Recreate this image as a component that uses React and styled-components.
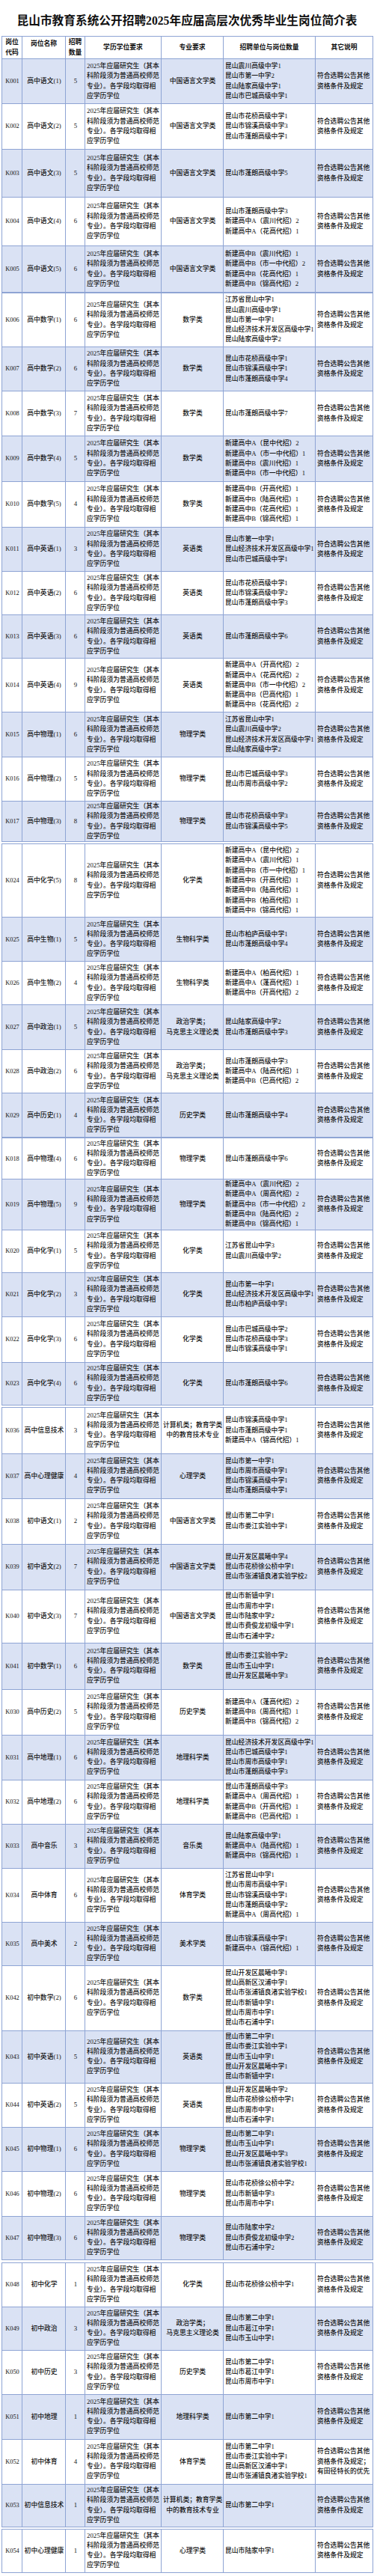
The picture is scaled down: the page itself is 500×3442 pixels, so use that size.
import styled, { createGlobalStyle } from "styled-components";

const GlobalStyle = createGlobalStyle`
  body {
    margin: 0;
    background: #fff;
    color: #151515;
    font-family: "Liberation Serif", "Noto Sans CJK SC", serif;
  }
`;

const Page = styled.main`
  width: 500px;
  padding: 18px 0 6px;
`;

const Title = styled.h1`
  margin: 0 0 10px;
  text-align: center;
  font-size: 15.7px;
  line-height: 20px;
  font-weight: 700;
  color: #111;
  white-space: nowrap;
`;

const Table = styled.table`
  width: 496px;
  margin: ${(p) => p.$gap}px 0 0 2px;
  border-collapse: collapse;
  table-layout: fixed;
  font-size: 8.8px;
  line-height: 13.3px;
`;

const Col = styled.col`
  width: ${(p) => p.$w}px;
`;

const Row = styled.tr`
  height: ${(p) => p.$h}px;
  background: ${(p) => (p.$shade ? "#dae2f4" : "#fff")};
`;

const HeadCell = styled.th`
  border: 1px solid #8ea4d4;
  padding: 0 1px;
  font-weight: 700;
  color: #111;
  text-align: center;
  vertical-align: ${(p) => (p.$top ? "top" : "middle")};
  padding-top: ${(p) => (p.$top ? "3px" : "0")};
  white-space: nowrap;
`;

const Cell = styled.td`
  border: 1px solid #8ea4d4;
  padding: 0 1px 0 2px;
  text-align: ${(p) => (p.$left ? "left" : "center")};
  vertical-align: middle;
  white-space: nowrap;
  overflow: hidden;
  font-weight: 500;
`;

const Code = styled.span`
  font-size: 8.4px;
`;

const EDU = ["2025年应届研究生（其本", "科阶段须为普通高校师范", "专业）。各学段均取得相", "应学历学位"];
const NOTE = ["符合选聘公告其他", "资格条件及规定"];

const ZW = ["中国语言文学类"];
const SX = ["数学类"];
const YY = ["英语类"];
const WL = ["物理学类"];
const HX = ["化学类"];
const SW = ["生物科学类"];
const ZZ = ["政治学类；", "马克思主义理论类"];
const LS = ["历史学类"];
const DL = ["地理科学类"];
const YL = ["音乐类"];
const TY = ["体育学类"];
const MS = ["美术学类"];
const XX = ["计算机类；教育学类", "中的教育技术专业"];
const XL = ["心理学类"];

const COLS = [27, 58, 26, 102, 83, 123, 77];

const segments = [
  {
    gap: 0,
    head: true,
    rows: [
      { c: "K001", n: "高中语文(1)", q: 5, m: ZW, h: 60, u: ["昆山震川高级中学1", "昆山市第一中学2", "昆山陆家高级中学1", "昆山市巴城高级中学1"] },
      { c: "K002", n: "高中语文(2)", q: 5, m: ZW, h: 61, u: ["昆山市花桥高级中学1", "昆山市锦溪高级中学3", "昆山市蓬朗高级中学1"] },
      { c: "K003", n: "高中语文(3)", q: 5, m: ZW, h: 64, u: ["昆山市蓬朗高级中学5"] },
      { c: "K004", n: "高中语文(4)", q: 6, m: ZW, h: 65, u: ["昆山市蓬朗高级中学3", "新建高中A（震川代招）2", "新建高中A（花高代招）1"] },
      { c: "K005", n: "高中语文(5)", q: 6, m: ZW, h: 62, u: ["新建高中B（震川代招）1", "新建高中B（市一中代招）2", "新建高中B（花高代招）1", "新建高中B（锦高代招）2"] },
    ],
  },
  {
    gap: 0,
    rows: [
      { c: "K006", n: "高中数学(1)", q: 6, m: SX, h: 72, u: ["江苏省昆山中学1", "昆山震川高级中学1", "昆山市第一中学1", "昆山经济技术开发区高级中学1", "昆山陆家高级中学2"] },
      { c: "K007", n: "高中数学(2)", q: 6, m: SX, h: 59, u: ["昆山市花桥高级中学1", "昆山市锦溪高级中学1", "昆山市蓬朗高级中学4"] },
      { c: "K008", n: "高中数学(3)", q: 7, m: SX, h: 60, u: ["昆山市蓬朗高级中学7"] },
      { c: "K009", n: "高中数学(4)", q: 5, m: SX, h: 61, u: ["新建高中A（昆中代招）2", "新建高中A（市一中代招）1", "新建高中B（震川代招）1", "新建高中B（市一中代招）1"] },
      { c: "K010", n: "高中数学(5)", q: 4, m: SX, h: 61, u: ["新建高中B（开高代招）1", "新建高中B（陆高代招）1", "新建高中B（花高代招）1", "新建高中B（锦高代招）1"] },
      { c: "K011", n: "高中英语(1)", q: 3, m: YY, h: 59, u: ["昆山市第一中学1", "昆山经济技术开发区高级中学1", "昆山市巴城高级中学1"] },
      { c: "K012", n: "高中英语(2)", q: 6, m: YY, h: 58, u: ["昆山市花桥高级中学1", "昆山市锦溪高级中学2", "昆山市蓬朗高级中学3"] },
      { c: "K013", n: "高中英语(3)", q: 6, m: YY, h: 58, u: ["昆山市蓬朗高级中学6"] },
      { c: "K014", n: "高中英语(4)", q: 9, m: YY, h: 72, u: ["新建高中A（开高代招）2", "新建高中A（花高代招）2", "新建高中B（市一中代招）2", "新建高中B（巴高代招）1", "新建高中B（花高代招）2"] },
      { c: "K015", n: "高中物理(1)", q: 6, m: WL, h: 60, u: ["江苏省昆山中学1", "昆山震川高级中学2", "昆山经济技术开发区高级中学1", "昆山陆家高级中学2"] },
      { c: "K016", n: "高中物理(2)", q: 5, m: WL, h: 59, u: ["昆山市巴城高级中学3", "昆山市周市高级中学2"] },
      { c: "K017", n: "高中物理(3)", q: 8, m: WL, h: 54, u: ["昆山市花桥高级中学3", "昆山市锦溪高级中学5"] },
    ],
  },
  {
    gap: 2,
    rows: [
      { c: "K024", n: "高中化学(5)", q: 8, m: HX, h: 98, u: ["新建高中A（昆中代招）2", "新建高中A（震川代招）1", "新建高中B（市一中代招）1", "新建高中B（开高代招）1", "新建高中B（陆高代招）1", "新建高中B（柏高代招）1", "新建高中B（锦高代招）1"] },
      { c: "K025", n: "高中生物(1)", q: 5, m: SW, h: 59, u: ["昆山市柏庐高级中学1", "昆山市蓬朗高级中学4"] },
      { c: "K026", n: "高中生物(2)", q: 4, m: SW, h: 58, u: ["新建高中A（柏高代招）1", "新建高中A（蓬高代招）1", "新建高中B（开高代招）2"] },
      { c: "K027", n: "高中政治(1)", q: 5, m: ZZ, h: 60, u: ["昆山陆家高级中学2", "昆山市蓬朗高级中学3"] },
      { c: "K028", n: "高中政治(2)", q: 6, m: ZZ, h: 58, u: ["昆山市蓬朗高级中学3", "新建高中A（陆高代招）1", "新建高中B（巴高代招）2"] },
      { c: "K029", n: "高中历史(1)", q: 4, m: LS, h: 59, u: ["昆山市蓬朗高级中学4"] },
    ],
  },
  {
    gap: 0,
    rows: [
      { c: "K018", n: "高中物理(4)", q: 6, m: WL, h: 55, u: ["昆山市蓬朗高级中学6"] },
      { c: "K019", n: "高中物理(5)", q: 9, m: WL, h: 67, u: ["新建高中A（震川代招）2", "新建高中A（周高代招）2", "新建高中B（市一中代招）2", "新建高中B（陆高代招）2", "新建高中B（锦高代招）1"] },
      { c: "K020", n: "高中化学(1)", q: 5, m: HX, h: 57, u: ["江苏省昆山中学3", "昆山震川高级中学2"] },
      { c: "K021", n: "高中化学(2)", q: 3, m: HX, h: 59, u: ["昆山市第一中学1", "昆山经济技术开发区高级中学1", "昆山市柏庐高级中学1"] },
      { c: "K022", n: "高中化学(3)", q: 6, m: HX, h: 61, u: ["昆山市巴城高级中学2", "昆山市花桥高级中学3", "昆山市锦溪高级中学1"] },
      { c: "K023", n: "高中化学(4)", q: 6, m: HX, h: 57, u: ["昆山市蓬朗高级中学6"] },
    ],
  },
  {
    gap: 2,
    rows: [
      { c: "K036", n: "高中信息技术", q: 3, m: XX, h: 62, u: ["昆山市锦溪高级中学1", "昆山市蓬朗高级中学1", "新建高中A（锦高代招）1"] },
      { c: "K037", n: "高中心理健康", q: 4, m: XL, h: 60, u: ["昆山市第一中学1", "昆山市周市高级中学1", "昆山市锦溪高级中学1", "昆山市蓬朗高级中学1"] },
      { c: "K038", n: "初中语文(1)", q: 2, m: ZW, h: 61, u: ["昆山市第二中学1", "昆山市娄江实验中学1"] },
      { c: "K039", n: "初中语文(2)", q: 7, m: ZW, h: 61, u: ["昆山开发区晨曦中学4", "昆山市花桥徐公桥中学1", "昆山市张浦镇良渚实验学校2"] },
      { c: "K040", n: "初中语文(3)", q: 7, m: ZW, h: 71, u: ["昆山市新镇中学1", "昆山市周市中学1", "昆山市陆家中学2", "昆山市费俊龙初级中学1", "昆山市石浦中学2"] },
      { c: "K041", n: "初中数学(1)", q: 6, m: SX, h: 62, u: ["昆山市娄江实验中学2", "昆山市玉山中学1", "昆山开发区晨曦中学3"] },
      { c: "K030", n: "高中历史(2)", q: 5, m: LS, h: 61, u: ["新建高中A（蓬高代招）2", "新建高中B（周高代招）1", "新建高中B（锦高代招）2"] },
      { c: "K031", n: "高中地理(1)", q: 6, m: DL, h: 60, u: ["昆山经济技术开发区高级中学1", "昆山市巴城高级中学1", "昆山市周市高级中学1", "昆山市蓬朗高级中学3"] },
      { c: "K032", n: "高中地理(2)", q: 6, m: DL, h: 59, u: ["昆山市蓬朗高级中学3", "新建高中A（周高代招）1", "新建高中B（开高代招）1", "新建高中B（巴高代招）1"] },
      { c: "K033", n: "高中音乐", q: 3, m: YL, h: 59, u: ["昆山陆家高级中学1", "新建高中A（陆高代招）1", "新建高中B（锦高代招）1"] },
      { c: "K034", n: "高中体育", q: 6, m: TY, h: 72, u: ["江苏省昆山中学1", "昆山市周市高级中学1", "昆山市锦溪高级中学1", "昆山市蓬朗高级中学2", "新建高中A（周高代招）1"] },
      { c: "K035", n: "高中美术", q: 2, m: MS, h: 58, u: ["昆山市锦溪高级中学1", "新建高中A（锦高代招）1"] },
      { c: "K042", n: "初中数学(2)", q: 6, m: SX, h: 87, u: ["昆山开发区晨曦中学1", "昆山高新区汉浦中学1", "昆山市张浦镇良渚实验学校1", "昆山市新镇中学1", "昆山市周市中学1", "昆山市石浦中学1"] },
      { c: "K043", n: "初中英语(1)", q: 5, m: YY, h: 70, u: ["昆山市第二中学1", "昆山市娄江实验中学1", "昆山市玉山中学1", "昆山开发区晨曦中学1", "昆山市新镇中学1"] },
      { c: "K044", n: "初中英语(2)", q: 5, m: YY, h: 59, u: ["昆山开发区晨曦中学2", "昆山市花桥徐公桥中学1", "昆山市周市中学1", "昆山市石浦中学1"] },
      { c: "K045", n: "初中物理(1)", q: 6, m: WL, h: 59, u: ["昆山市第二中学1", "昆山市玉山中学1", "昆山开发区晨曦中学3", "昆山市张浦镇良渚实验学校1"] },
      { c: "K046", n: "初中物理(2)", q: 6, m: WL, h: 60, u: ["昆山市花桥徐公桥中学2", "昆山市新镇中学3", "昆山市周市中学1"] },
      { c: "K047", n: "初中物理(3)", q: 6, m: WL, h: 58, u: ["昆山市陆家中学2", "昆山市费俊龙初级中学2", "昆山市石浦中学2"] },
    ],
  },
  {
    gap: 3,
    rows: [
      { c: "K048", n: "初中化学", q: 1, m: HX, h: 59, u: ["昆山市花桥徐公桥中学1"] },
      { c: "K049", n: "初中政治", q: 3, m: ZZ, h: 58, u: ["昆山市第二中学1", "昆山市葛江中学1", "昆山市玉山中学1"] },
      { c: "K050", n: "初中历史", q: 3, m: LS, h: 59, u: ["昆山市第二中学1", "昆山市葛江中学1", "昆山市周市中学1"] },
      { c: "K051", n: "初中地理", q: 1, m: DL, h: 60, u: ["昆山市第二中学1"] },
      { c: "K052", n: "初中体育", q: 4, m: TY, h: 60, u: ["昆山市第二中学1", "昆山市娄江实验中学1", "昆山高新区汉浦中学1", "昆山市张浦镇良渚实验学校1"], o: ["符合选聘公告其他", "资格条件及规定；", "有田径特长的优先"] },
      { c: "K053", n: "初中信息技术", q: 1, m: XX, h: 57, u: ["昆山市第二中学1"] },
    ],
  },
  {
    gap: 2,
    rows: [
      { c: "K054", n: "初中心理健康", q: 1, m: XL, h: 58, u: ["昆山市陆家中学1"] },
    ],
  },
];

const Lines = ({ items }) =>
  items.map((t, i) => (
    <span key={i}>
      {i > 0 && <br />}
      {t}
    </span>
  ));

const Header = () => (
  <Row $h={30} $shade={false}>
    <HeadCell>岗位<br />代码</HeadCell>
    <HeadCell $top>岗位名称</HeadCell>
    <HeadCell>招聘<br />数量</HeadCell>
    <HeadCell>学历学位要求</HeadCell>
    <HeadCell>专业要求</HeadCell>
    <HeadCell>招聘单位与岗位数量</HeadCell>
    <HeadCell>其它说明</HeadCell>
  </Row>
);

const JobRow = ({ job, shade }) => (
  <Row $h={job.h} $shade={shade}>
    <Cell><Code>{job.c}</Code></Cell>
    <Cell>{job.n}</Cell>
    <Cell>{job.q}</Cell>
    <Cell $left><Lines items={EDU} /></Cell>
    <Cell><Lines items={job.m} /></Cell>
    <Cell $left><Lines items={job.u} /></Cell>
    <Cell $left><Lines items={job.o || NOTE} /></Cell>
  </Row>
);

export default function App() {
  let index = 0;
  return (
    <Page>
      <GlobalStyle />
      <Title>昆山市教育系统公开招聘2025年应届高层次优秀毕业生岗位简介表</Title>
      {segments.map((seg, s) => (
        <Table key={s} $gap={seg.gap}>
          <colgroup>
            {COLS.map((w, i) => (
              <Col key={i} $w={w} />
            ))}
          </colgroup>
          <tbody>
            {seg.head && <Header />}
            {seg.rows.map((job) => {
              const shade = index % 2 === 0;
              index += 1;
              return <JobRow key={job.c} job={job} shade={shade} />;
            })}
          </tbody>
        </Table>
      ))}
    </Page>
  );
}
